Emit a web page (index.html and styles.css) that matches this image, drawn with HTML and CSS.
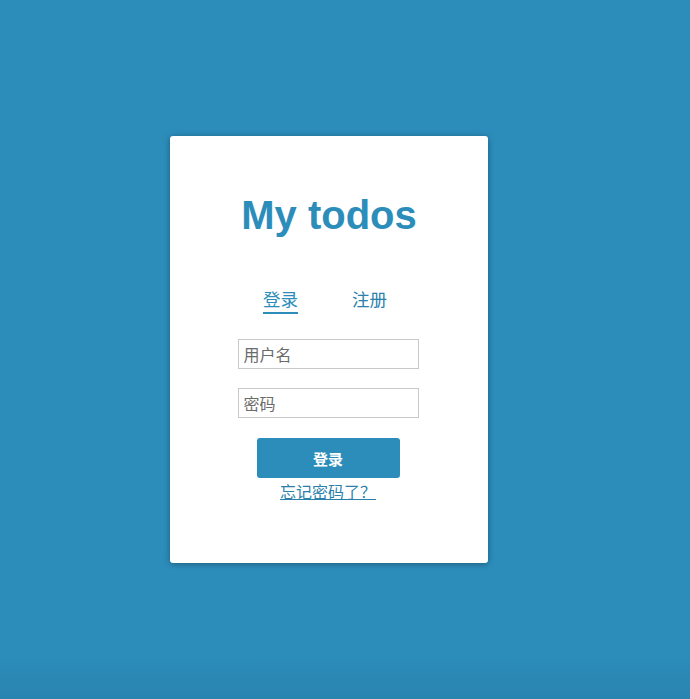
FILE: index.html
```html
<!DOCTYPE html>
<html lang="zh-CN">
<head>
    <meta charset="UTF-8">
    <title>My todos</title>
    <link rel="stylesheet" href="styles.css">
</head>
<body>
    <div class="card">
        <h1>My todos</h1>

        <div class="tabs">
            <span class="tab active">登录</span>
            <span class="tab">注册</span>
        </div>

        <form class="login-form" onsubmit="return false">
            <input type="text" placeholder="用户名">
            <input type="password" placeholder="密码">
            <button type="submit">登录</button>
            <a href="#" class="forgot">忘记密码了？</a>
        </form>
    </div>
</body>
</html>
```

FILE: styles.css
```css
html, body {
    height: 100%;
}
body {
    margin: 0;
    font-family: "Liberation Sans", "Noto Sans CJK SC", sans-serif;
    background: linear-gradient(to bottom, #2c8dbb 0%, #2c8dbb 93%, #2a84b0 100%);
    display: flex;
    align-items: center;
    justify-content: center;
    padding-right: 32px;
    box-sizing: border-box;
}
.card {
    width: 318px;
    height: 427px;
    box-sizing: border-box;
    background: #fff;
    border-radius: 3px;
    box-shadow: 0 1px 6px rgba(0, 0, 0, 0.35);
    padding: 55px 2px 0 0;
    text-align: center;
}
h1 {
    margin: 0;
    padding-left: 2px;
    font-size: 40px;
    line-height: 48px;
    font-weight: bold;
    color: #2c8dbb;
}
.tabs {
    margin-top: 48px;
    display: flex;
    justify-content: center;
    gap: 54px;
    padding-right: 6px;
}
.tab {
    font-family: "Noto Sans CJK SC", sans-serif;
    font-size: 17.5px;
    line-height: 24px;
    color: #2b7fab;
    padding-bottom: 1px;
    cursor: pointer;
}
.tab.active {
    color: #2c8dbb;
    border-bottom: 2px solid #2c8dbb;
}
.login-form {
    margin-top: 25px;
    display: flex;
    flex-direction: column;
    align-items: center;
}
input {
    width: 181px;
    height: 30px;
    box-sizing: border-box;
    margin: 0 0 19px;
    padding: 0 5px;
    border: 1px solid #c8c8c8;
    font-family: "Noto Sans CJK SC", sans-serif;
    font-size: 16px;
    color: #333;
    outline: none;
}
input::placeholder {
    color: #6b6b6b;
}
button {
    margin-top: 1px;
    width: 143px;
    height: 40px;
    border: none;
    border-radius: 3px;
    background-color: #2c8dbb;
    color: #fff;
    font-family: "Noto Sans CJK SC", sans-serif;
    font-size: 15px;
    font-weight: bold;
    cursor: pointer;
}
.forgot {
    margin-top: 4px;
    font-family: "Noto Sans CJK SC", sans-serif;
    font-size: 16px;
    line-height: 18px;
    color: #2b7fab;
    text-decoration: underline;
}
```
